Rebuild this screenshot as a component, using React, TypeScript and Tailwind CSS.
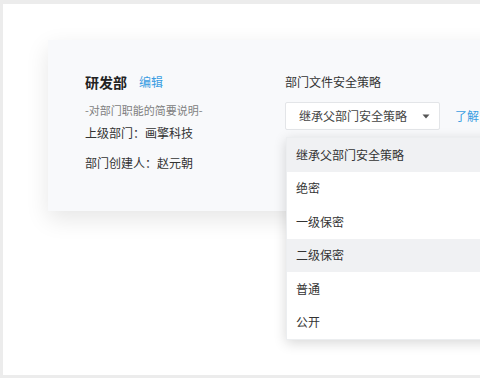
import React from "react";

const font = { fontFamily: '"Noto Sans CJK SC", "Noto Sans", sans-serif' };

export default function App() {
  const items = ["继承父部门安全策略", "绝密", "一级保密", "二级保密", "普通", "公开"];
  return (
    <div className="w-[480px] h-[378px] overflow-hidden bg-[#ececec] pl-[3px] pt-[4px]" style={font}>
      <div className="w-[520px] h-[371px] bg-white pl-[45px] pt-[36px]">
        <div className="w-[480px] h-[171px] bg-[#f8f9fb] shadow-[0_8px_22px_rgba(0,0,0,0.1)] pl-[37px] pt-[32px] flex">
          <div className="w-[200px] flex flex-col text-[#333]">
            <div className="flex items-center h-5">
              <span className="text-[14px] font-bold text-[#222] leading-5">研发部</span>
              <span className="ml-[12px] text-[12px] text-[#3a9de2] leading-5">编辑</span>
            </div>
            <div className="mt-[9px] text-[11px] leading-[18px] text-[#808080]">-对部门职能的简要说明-</div>
            <div className="mt-[5px] text-[12px] leading-[18px] text-[#333]">上级部门：画擎科技</div>
            <div className="mt-[12px] text-[12px] leading-[18px] text-[#333]">部门创建人：赵元朝</div>
          </div>
          <div className="flex flex-col">
            <div className="h-5 text-[12px] leading-5 text-[#333]">部门文件安全策略</div>
            <div className="mt-[10px] flex items-center relative">
              <div className="w-[155px] h-[28px] bg-white border border-[#e3e5e8] rounded-[2px] flex items-center pl-[13px] pr-[9px] justify-between">
                <span className="text-[12px] text-[#444]">继承父部门安全策略</span>
                <svg width="8" height="5" viewBox="0 0 8 5"><path d="M0.5 0.5 L7.5 0.5 L4 4.5 Z" fill="#555" /></svg>
              </div>
              <span className="ml-[15px] text-[12px] text-[#3a9de2] whitespace-nowrap">了解安全策略</span>
              <div className="absolute left-[1px] top-[35px] w-[260px] bg-white shadow-[0_3px_12px_rgba(0,0,0,0.16)] border border-[#eceef0] z-10">
                {items.map((t, i) => (
                  <div
                    key={t}
                    className={
                      "h-[33.5px] flex items-center pl-[9px] text-[12px] text-[#333] " +
                      (i === 0 || i === 3 ? "bg-[#f0f1f3]" : "bg-white")
                    }
                  >
                    {t}
                  </div>
                ))}
              </div>
            </div>
          </div>
        </div>
      </div>
    </div>
  );
}
